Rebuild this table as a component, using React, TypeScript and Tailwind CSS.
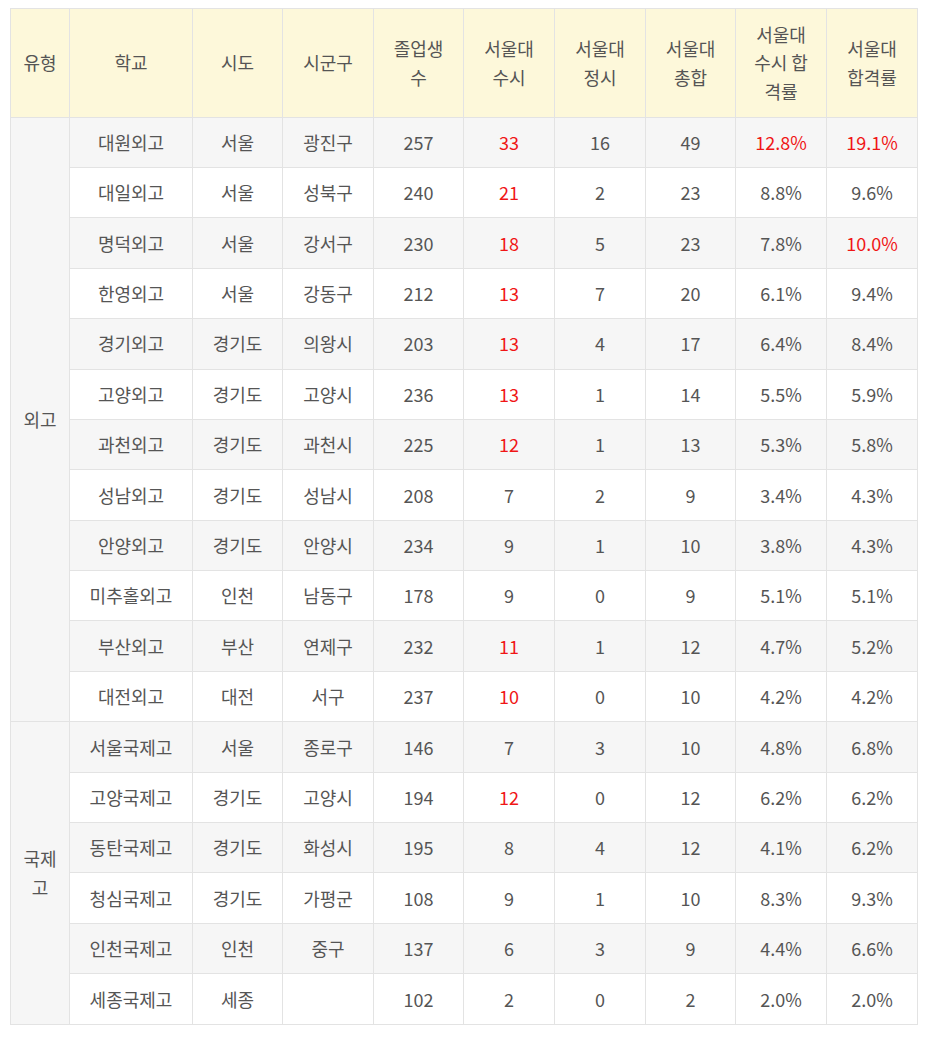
type Row = [string, string, string, string, string, string, string, string, string];

// r: indexes of the cells printed in red
const foreign: { d: Row; r: number[] }[] = [
  { d: ['대원외고', '서울', '광진구', '257', '33', '16', '49', '12.8%', '19.1%'], r: [4, 7, 8] },
  { d: ['대일외고', '서울', '성북구', '240', '21', '2', '23', '8.8%', '9.6%'], r: [4] },
  { d: ['명덕외고', '서울', '강서구', '230', '18', '5', '23', '7.8%', '10.0%'], r: [4, 8] },
  { d: ['한영외고', '서울', '강동구', '212', '13', '7', '20', '6.1%', '9.4%'], r: [4] },
  { d: ['경기외고', '경기도', '의왕시', '203', '13', '4', '17', '6.4%', '8.4%'], r: [4] },
  { d: ['고양외고', '경기도', '고양시', '236', '13', '1', '14', '5.5%', '5.9%'], r: [4] },
  { d: ['과천외고', '경기도', '과천시', '225', '12', '1', '13', '5.3%', '5.8%'], r: [4] },
  { d: ['성남외고', '경기도', '성남시', '208', '7', '2', '9', '3.4%', '4.3%'], r: [] },
  { d: ['안양외고', '경기도', '안양시', '234', '9', '1', '10', '3.8%', '4.3%'], r: [] },
  { d: ['미추홀외고', '인천', '남동구', '178', '9', '0', '9', '5.1%', '5.1%'], r: [] },
  { d: ['부산외고', '부산', '연제구', '232', '11', '1', '12', '4.7%', '5.2%'], r: [4] },
  { d: ['대전외고', '대전', '서구', '237', '10', '0', '10', '4.2%', '4.2%'], r: [4] },
];

const intl: { d: Row; r: number[] }[] = [
  { d: ['서울국제고', '서울', '종로구', '146', '7', '3', '10', '4.8%', '6.8%'], r: [] },
  { d: ['고양국제고', '경기도', '고양시', '194', '12', '0', '12', '6.2%', '6.2%'], r: [4] },
  { d: ['동탄국제고', '경기도', '화성시', '195', '8', '4', '12', '4.1%', '6.2%'], r: [] },
  { d: ['청심국제고', '경기도', '가평군', '108', '9', '1', '10', '8.3%', '9.3%'], r: [] },
  { d: ['인천국제고', '인천', '중구', '137', '6', '3', '9', '4.4%', '6.6%'], r: [] },
  { d: ['세종국제고', '세종', '', '102', '2', '0', '2', '2.0%', '2.0%'], r: [] },
];

const cell = 'border border-[#e3e3e3] px-2 py-[10.3px] text-center align-middle';
const headCell = 'border border-[#e3e3e3] px-2 py-[10.6px] text-center align-middle font-normal';

function Group({ label, rows, offset }: { label: React.ReactNode; rows: typeof foreign; offset: number }) {
  return (
    <>
      {rows.map((row, i) => (
        <tr key={row.d[0]} className={(offset + i) % 2 === 0 ? 'bg-[#f6f6f6]' : 'bg-white'}>
          {i === 0 && (
            <td rowSpan={rows.length} className={`${cell} bg-[#f6f6f6]`}>
              {label}
            </td>
          )}
          {row.d.map((v, j) => (
            <td key={j} className={`${cell} ${row.r.includes(j) ? 'text-[#f01616]' : ''}`}>
              {v}
            </td>
          ))}
        </tr>
      ))}
    </>
  );
}

export default function App() {
  return (
    <div
      className="bg-white pt-2 pl-[10px] text-[18px] leading-[28.8px] text-[#555]"
      style={{ fontFamily: '"Noto Sans CJK KR", "Noto Sans", sans-serif' }}
    >
      <table className="w-[907px] table-fixed border-collapse">
        <colgroup>
          <col className="w-[59px]" />
          <col className="w-[123px]" />
          <col className="w-[90px]" />
          <col className="w-[91px]" />
          <col className="w-[90px]" />
          <col className="w-[91px]" />
          <col className="w-[91px]" />
          <col className="w-[90px]" />
          <col className="w-[91px]" />
          <col className="w-[91px]" />
        </colgroup>
        <thead>
          <tr className="bg-[#fdf8da]">
            <th className={headCell}>유형</th>
            <th className={headCell}>학교</th>
            <th className={headCell}>시도</th>
            <th className={headCell}>시군구</th>
            <th className={headCell}>졸업생<br />수</th>
            <th className={headCell}>서울대<br />수시</th>
            <th className={headCell}>서울대<br />정시</th>
            <th className={headCell}>서울대<br />총합</th>
            <th className={headCell}>서울대<br />수시 합<br />격률</th>
            <th className={headCell}>서울대<br />합격률</th>
          </tr>
        </thead>
        <tbody>
          <Group label="외고" rows={foreign} offset={0} />
          <Group label={<>국제<br />고</>} rows={intl} offset={foreign.length} />
        </tbody>
      </table>
    </div>
  );
}
